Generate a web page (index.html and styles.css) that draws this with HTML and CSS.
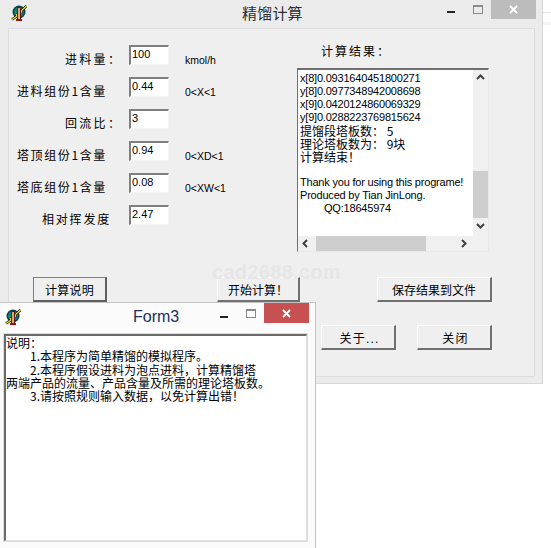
FILE: index.html

```html
<!DOCTYPE html>
<html lang="zh-CN">
<head>
  <meta charset="UTF-8" />
  <title>精馏计算</title>
  <link rel="stylesheet" href="styles.css">
</head>
<body>
  <div class="backdrop"></div>

  <div class="window main-win">
    <div class="titlebar">
      <svg class="app-icon" viewBox="0 0 16 16" width="16" height="16">
        <circle cx="8" cy="7" r="6.5" fill="#0c3f48" />
        <circle cx="8" cy="7" r="5" fill="#14807c" />
        <path d="M1 14.5 L6 11 L5 9 M10 8 L11 5 L15.5 1" stroke="#111" stroke-width="2.6" fill="none" />
        <path d="M1 14.5 L6 11 L5 9 M10 8 L11 5 L15.5 1" stroke="#e8e020" stroke-width="1.3" fill="none" />
        <rect x="6" y="2" width="4" height="13" fill="#5a1c14" />
        <rect x="7" y="3" width="2" height="11" fill="#d8a878" />
        <rect x="5" y="14" width="6" height="2" fill="#a01010" />
      </svg>
      <span class="title main-title">精馏计算</span>
      <span class="win-min"></span>
      <span class="win-max"></span>
      <span class="win-close grey">
        <svg viewBox="0 0 9 9" width="9" height="9"><path d="M1 1 L8 8 M8 1 L1 8" stroke="#fff" stroke-width="1.8" /></svg>
      </span>
    </div>

    <div class="panel">
      <div class="top">
        <div class="params">
          <label class="lbl l1">进料量：</label>
          <div class="box">100</div>
          <span class="hint">kmol/h</span>

          <label class="lbl">进料组份1含量</label>
          <div class="box">0.44</div>
          <span class="hint">0&lt;X&lt;1</span>

          <label class="lbl l1">回流比：</label>
          <div class="box">3</div>
          <span class="hint"></span>

          <label class="lbl">塔顶组份1含量</label>
          <div class="box">0.94</div>
          <span class="hint">0&lt;XD&lt;1</span>

          <label class="lbl">塔底组份1含量</label>
          <div class="box">0.08</div>
          <span class="hint">0&lt;XW&lt;1</span>

          <label class="lbl l2">相对挥发度</label>
          <div class="box">2.47</div>
          <span class="hint"></span>
        </div>

        <div class="results">
          <div class="res-title">计算结果：</div>
          <div class="memo">
            <div class="memo-text">
              <div class="num">x[8]0.0931640451800271</div>
              <div class="num">y[8]0.0977348942008698</div>
              <div class="num">x[9]0.0420124860069329</div>
              <div class="num">y[9]0.0288223769815624</div>
              <div>提馏段塔板数： 5</div>
              <div>理论塔板数为： 9块</div>
              <div>计算结束！</div>
              <div class="blank"></div>
              <div class="eng">Thank you for using this programe!</div>
              <div class="eng">Produced by Tian JinLong.</div>
              <div class="eng qq">QQ:18645974</div>
            </div>
            <div class="vbar">
              <svg class="arrow" viewBox="0 0 15 15" width="15" height="15"><path d="M4 9 L7.5 5.5 L11 9" stroke="#404040" stroke-width="2" fill="none" /></svg>
              <div class="vthumb"></div>
              <svg class="arrow" viewBox="0 0 15 15" width="15" height="15"><path d="M4 6 L7.5 9.5 L11 6" stroke="#404040" stroke-width="2" fill="none" /></svg>
            </div>
            <div class="hbar">
              <svg class="arrow" viewBox="0 0 15 15" width="15" height="15"><path d="M9 4 L5.5 7.5 L9 11" stroke="#404040" stroke-width="2" fill="none" /></svg>
              <div class="hthumb"></div>
              <svg class="arrow" viewBox="0 0 15 15" width="15" height="15"><path d="M6 4 L9.5 7.5 L6 11" stroke="#404040" stroke-width="2" fill="none" /></svg>
            </div>
          </div>
        </div>
      </div>

      <div class="btn-row first">
        <button class="btn sunken w74">计算说明</button>
        <button class="btn w83">开始计算！</button>
        <button class="btn w115">保存结果到文件</button>
      </div>
      <div class="btn-row second">
        <button class="btn w75 spaced">关于...</button>
        <button class="btn w75 spaced">关闭</button>
      </div>
    </div>
    <div class="watermark">cad2688.com</div>
  </div>

  <div class="window form3">
    <div class="titlebar">
      <svg class="app-icon" viewBox="0 0 16 16" width="16" height="16">
        <circle cx="8" cy="7" r="6.5" fill="#0c3f48" />
        <circle cx="8" cy="7" r="5" fill="#14807c" />
        <path d="M1 14.5 L6 11 L5 9 M10 8 L11 5 L15.5 1" stroke="#111" stroke-width="2.6" fill="none" />
        <path d="M1 14.5 L6 11 L5 9 M10 8 L11 5 L15.5 1" stroke="#e8e020" stroke-width="1.3" fill="none" />
        <rect x="6" y="2" width="4" height="13" fill="#5a1c14" />
        <rect x="7" y="3" width="2" height="11" fill="#d8a878" />
        <rect x="5" y="14" width="6" height="2" fill="#a01010" />
      </svg>
      <span class="title form-title">Form3</span>
      <span class="win-min"></span>
      <span class="win-max"></span>
      <span class="win-close red">
        <svg viewBox="0 0 9 9" width="9" height="9"><path d="M1 1 L8 8 M8 1 L1 8" stroke="#fff" stroke-width="1.8" /></svg>
      </span>
    </div>
    <div class="note">
      <div>说明：</div>
      <div class="indent">1.本程序为简单精馏的模拟程序。</div>
      <div class="indent">2.本程序假设进料为泡点进料，计算精馏塔</div>
      <div>两端产品的流量、产品含量及所需的理论塔板数。</div>
      <div class="indent">3.请按照规则输入数据，以免计算出错！</div>
    </div>
  </div>
</body>
</html>
```

FILE: styles.css

```css
html, body {
  margin: 0;
  padding: 0;
}
body {
  position: relative;
  width: 551px;
  height: 548px;
  overflow: hidden;
  background: #fff;
  font-family: "Noto Sans CJK SC", "Liberation Sans", sans-serif;
  font-size: 12px;
  color: #000;
}

/* faint edge of whatever sits behind the main window */
.backdrop {
  position: absolute;
  left: 543px;
  top: 12px;
  width: 8px;
  height: 9px;
  border-top: 1px solid #e4e4e4;
  border-bottom: 3px solid #f5f5f5;
}

/* windows */
.window {
  position: absolute;
  box-sizing: border-box;
}
.main-win {
  left: 0;
  top: 0;
  width: 543px;
  height: 384px;
  background: #ebebeb;
  border-right: 1px solid #d8d8d8;
  border-bottom: 1px solid #d8d8d8;
}
.form3 {
  left: -1px;
  top: 302px;
  width: 317px;
  height: 250px;
  background: #fbfbfb;
  border: 1px solid #c4c4c4;
  padding: 0 8px 0 4px;
}

.titlebar {
  display: flex;
  align-items: flex-start;
  height: 28px;
}
.form3 .titlebar {
  height: 31px;
}
.app-icon {
  margin: 5px 0 0 11px;
  flex: none;
}
.form3 .app-icon {
  margin: 6px 0 0 1px;
}
.title {
  flex: none;
  font-size: 15px;
  color: #2e2e2e;
}
.main-title {
  margin: 2px 0 0 215px;
  width: 175px;
  letter-spacing: 0.2px;
}
.form-title {
  margin: 5px 0 0 0;
  padding-left: 112px;
  width: 87px;
  font-family: "Liberation Sans", sans-serif;
  font-size: 16px;
  color: #20305a;
}
.win-min {
  flex: none;
  width: 8px;
  height: 2px;
  margin: 11px 0 0 0;
  background: #222;
}
.main-win .win-min {
  margin-left: 30px;
}
.form3 .win-min {
  margin-top: 13px;
}
.win-max {
  flex: none;
  width: 8px;
  height: 6px;
  margin: 5px 0 0 18px;
  border: 1px solid #8a8a8a;
  border-top-width: 2px;
}
.form3 .win-max {
  margin-top: 6px;
}
.win-close {
  flex: none;
  display: flex;
  align-items: center;
  justify-content: center;
  margin-left: 8px;
  width: 45px;
  height: 19px;
}
.win-close.grey {
  background: #bcbcbc;
}
.win-close.red {
  background: #c75050;
  height: 20px;
}

/* main panel */
.panel {
  box-sizing: border-box;
  margin: 0 7px 0 8px;
  height: 349px;
  background: #efefef;
  border: 1px solid #dcdcdc;
  padding-top: 16px;
}
.top {
  display: flex;
  height: 232px;
}
.params {
  display: grid;
  grid-template-columns: 111px 40px auto;
  grid-auto-rows: 32px;
  column-gap: 9px;
  align-content: start;
  width: 288px;
  flex: none;
}
.lbl {
  padding: 6px 0 0 8px;
  line-height: 16px;
  letter-spacing: 1.6px;
  white-space: nowrap;
}
.l1 {
  padding-left: 56px;
  letter-spacing: 2.3px;
}
.l2 {
  padding-left: 33px;
  letter-spacing: 1.8px;
}
.box {
  box-sizing: border-box;
  width: 40px;
  height: 20px;
  background: #fff;
  border: 1px solid;
  border-color: #808080 #f4f4f4 #f4f4f4 #808080;
  border-top-width: 2px;
  border-left-width: 2px;
  font-family: "Liberation Sans", sans-serif;
  font-size: 11px;
  line-height: 15px;
  padding-left: 1px;
}
.hint {
  padding-top: 9px;
  font-family: "Liberation Sans", sans-serif;
  font-size: 10.5px;
  line-height: 12px;
  margin-left: 7px;
}

.results {
  flex: none;
}
.res-title {
  height: 24px;
  padding-left: 24px;
  letter-spacing: 2px;
  line-height: 14px;
  margin-top: -1px;
}
.memo {
  display: grid;
  grid-template-columns: 175px 15px;
  grid-template-rows: 166px 15px;
  box-sizing: border-box;
  width: 192px;
  height: 184px;
  background: #f0f0f0;
  border: 1px solid;
  border-color: #707070 #e8e8e8 #e8e8e8 #707070;
  border-top-width: 2px;
}
.memo-text {
  padding: 2px 0 0 2px;
  overflow: hidden;
  white-space: nowrap;
  background: #fff;
  font-size: 12px;
  line-height: 13px;
}
.num {
  font-family: "Liberation Sans", sans-serif;
  font-size: 11px;
  letter-spacing: -0.2px;
}
.eng {
  font-family: "Liberation Sans", sans-serif;
  font-size: 11px;
  letter-spacing: -0.2px;
}
.qq {
  padding-left: 24px;
}
.blank {
  height: 13px;
}
.vbar {
  display: flex;
  flex-direction: column;
  background: #f0f0f0;
}
.vthumb {
  margin-top: 86px;
  height: 47px;
  background: #cdcdcd;
}
.arrow {
  flex: none;
}
.hbar {
  display: flex;
  background: #f0f0f0;
  width: 175px;
}
.hthumb {
  width: 110px;
  background: #cdcdcd;
  margin-left: 3px;
}
.hbar .arrow:last-child {
  margin-left: 30px;
}

/* buttons */
.btn-row {
  display: flex;
}
.first {
  padding-left: 24px;
}
.second {
  margin-top: 23px;
  padding-left: 312px;
}
.btn {
  box-sizing: border-box;
  height: 25px;
  padding: 0;
  background: #efefef;
  border: 1px solid;
  border-color: #fff #707070 #707070 #fff;
  border-width: 1px 2px 2px 1px;
  font-family: inherit;
  font-size: 12px;
  color: #000;
}
.sunken {
  border-color: #808080 #606060 #606060 #808080;
  letter-spacing: 0.3px;
}
.w74 { width: 74px; }
.w75 { width: 75px; }
.w83 { width: 83px; margin-left: 110px; }
.w115 { width: 115px; margin-left: 77px; }
.spaced {
  font-family: "Liberation Sans", "Noto Sans CJK SC", sans-serif;
  letter-spacing: 1.2px;
  padding-left: 3px;
}
.w75 + .w75 { margin-left: 21px; }

.watermark {
  position: absolute;
  left: 212px;
  top: 261px;
  font-family: "Liberation Sans", sans-serif;
  font-weight: bold;
  font-size: 20px;
  letter-spacing: 0.3px;
  color: #e6e6e6;
}

/* Form3 note */
.note {
  box-sizing: border-box;
  height: 207px;
  background: #fff;
  border: 1px solid;
  border-color: #6a6a6a #e0e0e0 #e0e0e0 #6a6a6a;
  border-width: 2px 1px 1px 2px;
  outline: 1px solid #dcdcdc;
  font-size: 12px;
  line-height: 13.3px;
  white-space: nowrap;
  overflow: hidden;
}
.indent {
  padding-left: 24px;
}
```
